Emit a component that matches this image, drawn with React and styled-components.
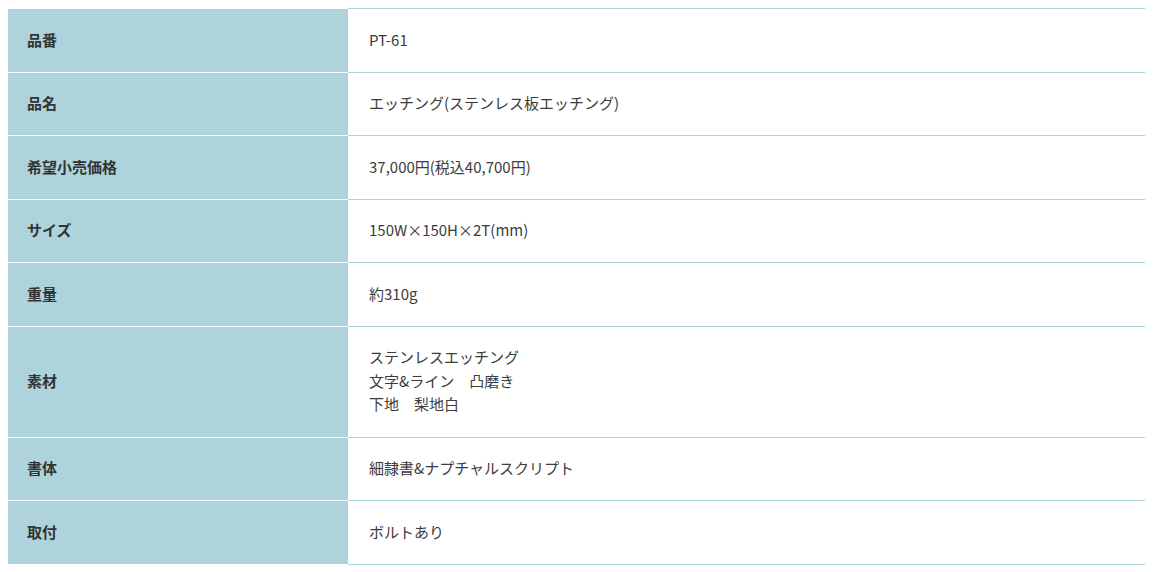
import React from 'react';
import styled, { createGlobalStyle } from 'styled-components';

const GlobalStyle = createGlobalStyle`
  body {
    margin: 8px;
    background: #fff;
    font-family: "Noto Sans CJK JP", "Noto Sans", sans-serif;
  }
`;

const SpecTable = styled.table`
  width: 1138px;
  border-collapse: collapse;
  font-size: 15px;
  line-height: 23.5px;
`;

const HeadCell = styled.th`
  width: 300px;
  padding: 18.5px 20px 20.6px 18px;
  background: #afd3dc;
  color: #333;
  font-weight: 700;
  text-align: left;
  vertical-align: middle;
  border-top: 1px solid #fff;
  border-bottom: 1px solid #fff;
  border-left: 1px solid #afd3dc;
`;

const DataCell = styled.td`
  padding: 18.5px 20px 20.6px 21px;
  color: #3c3c3c;
  border: 1px solid #acd4dd;
  vertical-align: middle;
`;

const rows = [
  ['品番', ['PT-61']],
  ['品名', ['エッチング(ステンレス板エッチング)']],
  ['希望小売価格', ['37,000円(税込40,700円)']],
  ['サイズ', ['150W×150H×2T(mm)']],
  ['重量', ['約310g']],
  ['素材', ['ステンレスエッチング', '文字&ライン　凸磨き', '下地　梨地白']],
  ['書体', ['細隷書&ナプチャルスクリプト']],
  ['取付', ['ボルトあり']],
];

const App = () => (
  <>
    <GlobalStyle />
    <SpecTable>
      <tbody>
        {rows.map(([label, lines], i) => (
          <tr key={i}>
            <HeadCell>{label}</HeadCell>
            <DataCell>
              {lines.map((l, j) => (
                <React.Fragment key={j}>
                  {j > 0 && <br />}
                  {l}
                </React.Fragment>
              ))}
            </DataCell>
          </tr>
        ))}
      </tbody>
    </SpecTable>
  </>
);

export default App;
